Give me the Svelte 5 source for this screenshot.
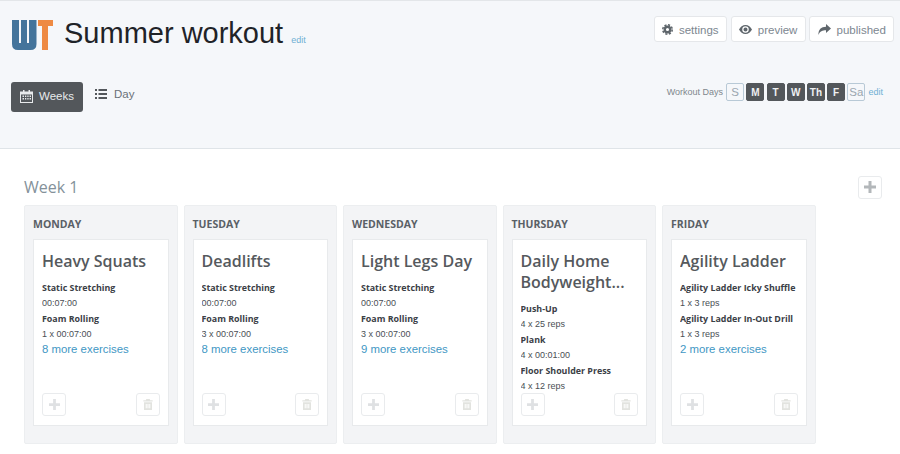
<script lang="ts">
  type Exercise = { name: string; detail: string };
  type Day = { day: string; title: string; exercises: Exercise[]; more?: string };

  const stretch = (sets: string): Exercise[] => [
    { name: 'Static Stretching', detail: '00:07:00' },
    { name: 'Foam Rolling', detail: `${sets} x 00:07:00` },
  ];

  const days: Day[] = [
    { day: 'Monday', title: 'Heavy Squats', exercises: stretch('1'), more: '8 more exercises' },
    { day: 'Tuesday', title: 'Deadlifts', exercises: stretch('3'), more: '8 more exercises' },
    { day: 'Wednesday', title: 'Light Legs Day', exercises: stretch('3'), more: '9 more exercises' },
    {
      day: 'Thursday',
      title: 'Daily Home Bodyweight...',
      exercises: [
        { name: 'Push-Up', detail: '4 x 25 reps' },
        { name: 'Plank', detail: '4 x 00:01:00' },
        { name: 'Floor Shoulder Press', detail: '4 x 12 reps' },
      ],
    },
    {
      day: 'Friday',
      title: 'Agility Ladder',
      exercises: [
        { name: 'Agility Ladder Icky Shuffle', detail: '1 x 3 reps' },
        { name: 'Agility Ladder In-Out Drill', detail: '1 x 3 reps' },
      ],
      more: '2 more exercises',
    },
  ];

  const workoutDays = [
    { label: 'S', on: false },
    { label: 'M', on: true },
    { label: 'T', on: true },
    { label: 'W', on: true },
    { label: 'Th', on: true },
    { label: 'F', on: true },
    { label: 'Sa', on: false },
  ];
</script>

<header class="header">
  <div class="top">
    <div class="brand">
      <svg class="logo" viewBox="0 0 41 31" width="41" height="31" aria-hidden="true">
        <path d="M0 1h7v23h2V1h6v23h2V1h7.500v24q0 6-6 6H6q-6 0-6-6z" fill="#44749b" />
        <path d="M26 1h15v6h-5v24h-6V7h-4z" fill="#ee8a43" />
      </svg>
      <h1>Summer workout</h1>
      <a class="edit title-edit" href="#edit">edit</a>
    </div>
    <div class="actions">
      <button class="action">
        <svg viewBox="0 0 14 14" width="11" height="11" aria-hidden="true">
          <circle cx="7" cy="7" r="3.500" fill="none" stroke="#5f666c" stroke-width="3" />
          <circle cx="7" cy="7" r="6" fill="none" stroke="#5f666c" stroke-width="2" stroke-dasharray="2.700 2" />
        </svg>
        settings
      </button>
      <button class="action">
        <svg viewBox="0 0 16 11" width="13" height="9" aria-hidden="true">
          <path d="M8 0c3.500 0 6.300 2.200 8 5.500C14.300 8.800 11.500 11 8 11S1.700 8.800 0 5.500C1.700 2.200 4.500 0 8 0zm0 1.500a4 4 0 1 0 0 8 4 4 0 0 0 0-8zm0 1.500a2.500 2.500 0 1 1 0 5 2.500 2.500 0 0 1 0-5z" fill="#5f666c" fill-rule="evenodd" />
        </svg>
        preview
      </button>
      <button class="action">
        <svg viewBox="0 0 13 11" width="13" height="11" aria-hidden="true">
          <path d="M8 0l5 4.500L8 9V6.200C4.500 6.200 2 7 .4 11 .4 5.500 3 2.800 8 2.800z" fill="#5f666c" />
        </svg>
        published
      </button>
    </div>
  </div>
  <div class="bottom">
    <nav class="tabs">
      <button class="tab active">
        <svg viewBox="0 0 13 13" width="13" height="13" aria-hidden="true">
          <path d="M3 0h1.500v1.500h4V0H10v1.500h3V13H0V1.500h3zM1 4.500v7.500h11V4.500zM2.500 5.500h1.500v1.500H2.500zm2.500 0h1.300v1.500H5zm2.300 0h1.300v1.500H7.300zm2.300 0H11v1.500H9.600zM2.500 8h1.500v1.500H2.500zM5 8h1.300v1.500H5zm2.300 0h1.300v1.500H7.300zM9.600 8H11v1.500H9.600z" fill="#e8eaec" fill-rule="evenodd" />
        </svg>
        Weeks
      </button>
      <button class="tab">
        <svg viewBox="0 0 12 10" width="12" height="10" aria-hidden="true">
          <path d="M0 0h2v2H0zm3.500 0H12v2H3.500zM0 4h2v2H0zm3.500 0H12v2H3.500zM0 8h2v2H0zm3.500 0H12v2H3.500z" fill="#53575b" />
        </svg>
        Day
      </button>
    </nav>
    <div class="workout-days">
      <span class="wd-label">Workout Days</span>
      {#each workoutDays as d}
        <span class="chip" class:on={d.on}>{d.label}</span>
      {/each}
      <a class="edit wd-edit" href="#edit">edit</a>
    </div>
  </div>
</header>

<main class="main">
  <div class="week-head">
    <h2>Week 1</h2>
    <button class="icon-btn week-add" aria-label="Add week">
      <svg viewBox="0 0 12 12" width="12" height="12" aria-hidden="true">
        <path d="M4.500 0h3v4.500H12v3H7.500V12h-3V7.500H0v-3h4.500z" fill="#b3b7ba" />
      </svg>
    </button>
  </div>
  <div class="columns">
    {#each days as d}
      <section class="column">
        <h3>{d.day}</h3>
        <article class="card">
          <div class="card-body">
            <h4>{d.title}</h4>
            {#each d.exercises as ex}
              <div class="ex-name">{ex.name}</div>
              <div class="ex-detail">{ex.detail}</div>
            {/each}
            {#if d.more}
              <a class="more" href="#more">{d.more}</a>
            {/if}
          </div>
          <div class="card-foot">
            <button class="icon-btn" aria-label="Add exercise">
              <svg viewBox="0 0 12 12" width="11" height="11" aria-hidden="true">
                <path d="M4.500 0h3v4.500H12v3H7.500V12h-3V7.500H0v-3h4.500z" fill="#dfe1e3" />
              </svg>
            </button>
            <button class="icon-btn" aria-label="Delete workout">
              <svg viewBox="0 0 11 13" width="10" height="11" aria-hidden="true">
                <path d="M3.500 0h4l.5 1.500h3V3H0V1.500h3zM.8 3.800h9.400V13H.8zm2 2v5h1.200v-5zm2.100 0v5h1.200v-5zm2.100 0v5h1.200v-5z" fill="#e2e3df" fill-rule="evenodd" />
              </svg>
            </button>
          </div>
        </article>
      </section>
    {/each}
  </div>
</main>

<style>
  :global(body) {
    margin: 0;
    background: #fff;
    font-family: "Liberation Sans", Arial, sans-serif;
  }
  button {
    font-family: inherit;
    cursor: pointer;
  }
  a {
    text-decoration: none;
  }
  .header {
    height: 147px;
    background: #f5f7fa;
    border-top: 1px solid #e3e6e9;
    border-bottom: 1px solid #dfe4e8;
    padding: 0 6px 0 11px;
    display: flex;
    flex-direction: column;
  }
  .top {
    display: flex;
    justify-content: space-between;
    align-items: flex-start;
    height: 81px;
  }
  .brand {
    display: flex;
    align-items: flex-start;
    padding: 18px 0 0 1px;
  }
  .logo {
    display: block;
  }
  h1 {
    margin: -3px 0 0 11px;
    font-size: 29px;
    line-height: 34px;
    font-weight: 400;
    color: #1f2328;
  }
  .edit {
    font-size: 9px;
    color: #6fb0d4;
  }
  .title-edit {
    margin: 16px 0 0 8px;
    line-height: 10px;
  }
  .actions {
    display: flex;
    gap: 3.800px;
    padding-top: 15px;
  }
  .action {
    height: 26px;
    padding: 1px 7.200px 0;
    display: flex;
    align-items: center;
    gap: 6px;
    background: #fff;
    border: 1px solid #e5e7ea;
    border-radius: 3px;
    font-size: 11.500px;
    color: #7d8790;
  }
  .bottom {
    display: flex;
    justify-content: space-between;
    align-items: flex-start;
  }
  .tabs {
    display: flex;
  }
  .tab {
    height: 30px;
    padding: 0 9px 2px;
    display: flex;
    align-items: center;
    gap: 6px;
    border: 0;
    border-radius: 3px;
    background: transparent;
    font-size: 11.500px;
    color: #6a7178;
  }
  .tab:not(.active) {
    margin-left: 3px;
    height: 26px;
    gap: 7px;
  }
  .tab.active {
    background: #53575b;
    color: #e8eaec;
  }
  .workout-days {
    display: flex;
    align-items: center;
    gap: 2.200px;
    padding-right: 11px;
  }
  .wd-label {
    font-size: 9px;
    line-height: 20px;
    color: #80878d;
    margin-right: 1px;
  }
  .chip {
    box-sizing: border-box;
    width: 18px;
    height: 18px;
    display: flex;
    align-items: center;
    justify-content: center;
    border: 1px solid #b8c9d6;
    border-radius: 2px;
    font-size: 10px;
    color: #9aa6af;
  }
  .chip:not(.on) {
    font-size: 11.500px;
  }
  .chip.on {
    background: #53575b;
    border-color: #53575b;
    color: #eef0f2;
    font-weight: 700;
  }
  .wd-edit {
    margin-left: 1px;
  }
  .main {
    padding: 27px 18px 10px 24px;
  }
  .week-head {
    display: flex;
    justify-content: space-between;
    align-items: center;
    height: 22px;
    margin-bottom: 7px;
  }
  h2 {
    margin: 0;
    font-family: "Open Sans", sans-serif;
    font-size: 16px;
    font-weight: 400;
    color: #84919a;
  }
  .icon-btn {
    box-sizing: border-box;
    width: 24px;
    height: 23px;
    padding: 0;
    display: flex;
    align-items: center;
    justify-content: center;
    background: #fff;
    border: 1px solid #e9ebed;
    border-radius: 3px;
  }
  .columns {
    display: flex;
    gap: 6px;
  }
  .column {
    box-sizing: border-box;
    width: 153.500px;
    height: 239px;
    padding: 0 8px;
    display: flex;
    flex-direction: column;
    background: #f3f4f6;
    border: 1px solid #eceef0;
    border-radius: 2px;
  }
  h3 {
    margin: 0;
    height: 33px;
    font-family: "Open Sans", sans-serif;
    font-size: 10.500px;
    font-weight: 700;
    line-height: 36px;
    text-transform: uppercase;
    color: #5a6066;
  }
  .card {
    box-sizing: border-box;
    height: 187px;
    padding: 0 8px 9px;
    display: flex;
    flex-direction: column;
    background: #fff;
    border: 1px solid #e8eaec;
  }
  .card-body {
    flex: 1;
    min-height: 0;
    overflow: hidden;
  }
  h4 {
    margin: 11px 0 8px;
    font-family: "Open Sans", sans-serif;
    font-size: 16px;
    line-height: 21px;
    font-weight: 600;
    color: #55595d;
  }
  .ex-name {
    font-family: "Open Sans", sans-serif;
    font-size: 8.900px;
    line-height: 16px;
    font-weight: 700;
    white-space: nowrap;
    color: #3b4046;
  }
  .ex-detail {
    font-size: 9px;
    line-height: 15px;
    color: #4a4f55;
  }
  .more {
    display: block;
    margin-top: -1px;
    font-size: 11.400px;
    line-height: 17px;
    color: #3f97c4;
  }
  .card-foot {
    display: flex;
    justify-content: space-between;
  }
</style>
